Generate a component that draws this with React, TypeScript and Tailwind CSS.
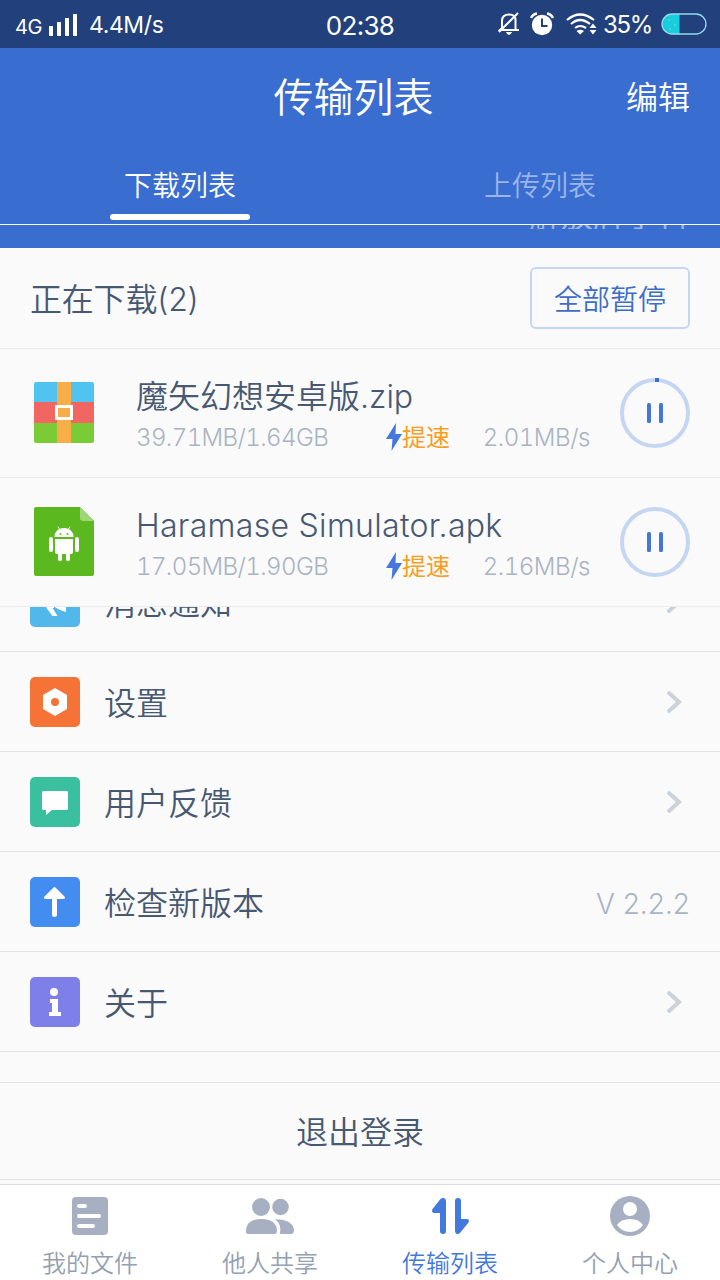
import React from "react";

const downloads = [
    { id: 1, kind: "zip", name: "魔矢幻想安卓版.zip", size: "39.71MB/1.64GB", speed: "2.01MB/s", started: true },
    { id: 2, kind: "apk", name: "Haramase Simulator.apk", size: "17.05MB/1.90GB", speed: "2.16MB/s", started: false },
];

const ZipIcon = () => (
    <svg width="60" height="61" viewBox="0 0 60 61">
        <path d="M2 0H58Q60 0 60 2V20H0V2Q0 0 2 0Z" fill="#50c3f0" />
        <path d="M0 20H60V41H0Z" fill="#f26661" />
        <path d="M0 41H60V59Q60 61 58 61H2Q0 61 0 59Z" fill="#7acb35" />
        <path d="M23 0H37V61H23Z" fill="#f7ad48" />
        <rect x="22.500" y="24.500" width="15" height="12" fill="#f7ad48" stroke="#fff" strokeWidth="3" />
    </svg>
);

const ApkIcon = () => (
    <svg width="60" height="69" viewBox="0 0 60 69">
        <path d="M2 0H46L60 14V67Q60 69 58 69H2Q0 69 0 67V2Q0 0 2 0Z" fill="#5cb81f" />
        <path d="M46 0L60 14H49Q46 14 46 11Z" fill="#9ed67a" />
        <g fill="#fff">
            <path d="M20.500 30C20.500 24.500 24.500 21 30 21S39.500 24.500 39.500 30Z" />
            <path d="M24 19.500L26 23M36 19.500L34 23" stroke="#fff" strokeWidth="1" />
            <path d="M21 32H39V45Q39 47 37 47H36V52.200A2 2 0 0 1 32 52.200V47H28V52.200A2 2 0 0 1 24 52.200V47H23Q21 47 21 45Z" />
            <rect x="15" y="30" width="4" height="15" rx="2" />
            <rect x="41" y="30" width="4" height="15" rx="2" />
        </g>
        <circle cx="26.500" cy="27" r="1" fill="#5cb81f" />
        <circle cx="33.500" cy="27" r="1" fill="#5cb81f" />
    </svg>
);

const PauseButton = ({ started }: any) => (
    <button className="shrink-0">
        <svg width="70" height="70" viewBox="0 0 70 70">
            <circle cx="35" cy="35" r="33" fill="none" stroke="#c5d6f3" strokeWidth="4" />
            {started && <path d="M35 0H39V4H35Z" fill="#3d6fc8" />}
            <rect x="27" y="25" width="4" height="20" rx="1.500" fill="#4478d6" />
            <rect x="39" y="25" width="4" height="20" rx="1.500" fill="#4478d6" />
        </svg>
    </button>
);

const DownloadItem = ({ item }: any) => (
    <li className="flex h-[129px] items-center border-b border-[#ececee] pr-[30px] pl-[34px]">
        <div className="w-[102px] shrink-0 pb-0.5">{item.kind === "zip" ? <ZipIcon /> : <ApkIcon />}</div>
        <div className="w-[454px] shrink-0 pt-1">
            <div className={`h-[46px] text-[32px] leading-[46px] whitespace-nowrap ${item.kind === "zip" ? "tracking-normal" : "tracking-[0.3px]"}`}>
                {item.name}
            </div>
            <div className="flex h-9 items-center text-2xl leading-9 text-[#a9b4c3] tabular-nums">
                <span className="w-[250px] tracking-[-0.6px]">{item.size}</span>
                <svg className="mb-[3px] shrink-0" width="16" height="28" viewBox="0 0 16 28">
                    <path d="M10 0L0 16H6.500L5.500 28L16 11H9.500Z" fill="#4478dc" />
                </svg>
                <span className="font-normal text-[#f99d1c]">提速</span>
                <span className="flex-1" />
                <span className="tracking-[-0.45px]">{item.speed}</span>
            </div>
        </div>
        <span className="flex-1" />
        <PauseButton started={item.started} />
    </li>
);

const Chevron = () => (
    <svg className="mr-2" width="16" height="24" viewBox="0 0 16 24">
        <path d="M3 3L13 12L3 21" fill="none" stroke="#ccd2d9" strokeWidth="4" strokeLinecap="round" strokeLinejoin="miter" />
    </svg>
);

const MenuItem = ({ color, icon, label, extra }: any) => (
    <li className="flex h-[100px] shrink-0 items-center border-b border-[#e2e4e6] px-[30px]">
        <div className={`mr-6 h-[50px] w-[50px] rounded-[5px] ${color}`}>
            <svg width="50" height="50" viewBox="0 0 50 50" fill="#fff">
                {icon}
            </svg>
        </div>
        <span className="flex-1 pt-1 text-[32px] leading-[46px]">{label}</span>
        {extra || <Chevron />}
    </li>
);

const TabItem = ({ icon, label, active }: any) => (
    <li className={`flex flex-1 flex-col items-center ${active ? "text-[#4478dc]" : "text-[#94a0b2]"}`}>
        <svg className="mt-[7px] shrink-0" width="60" height="48" viewBox="0 0 60 48" fill={active ? "#4478dc" : "#a7b0c2"}>
            {icon}
        </svg>
        <span className="mt-2 text-2xl leading-8">{label}</span>
    </li>
);

const StatusBar = () => (
    <div className="grid h-12 grid-cols-3 items-center bg-[#22407b] font-normal text-white">
        <div className="flex items-center pl-[15px]">
            <span className="w-[34px] pt-[5px] text-xl tracking-tight">4G</span>
            <svg width="29" height="24" viewBox="0 0 29 24" fill="#fff">
                <path d="M0 14H4V24H0ZM8 10H12V24H8ZM16 6H20V24H16ZM24 2H28V24H24Z" />
            </svg>
            <span className="ml-[11px] pt-0.5 text-[23px] tracking-[-0.4px]">4.4M/s</span>
        </div>
        <div className="pt-1 text-center text-[26px] leading-none tracking-[-0.7px]">02:38</div>
        <div className="flex items-center justify-end pr-[13px]">
            <svg width="22" height="24" viewBox="0 0 22 24" fill="none" stroke="#fff" strokeWidth="2">
                <path d="M4 17V9Q4 2.500 11 2.500T17.500 9V18H2L4 16M1 20L20 1M16 18H21" />
                <path d="M8 20H14Q13 23 11 23T8 20Z" fill="#fff" stroke="none" />
            </svg>
            <svg className="ml-[10px]" width="24" height="24" viewBox="0 0 24 24">
                <circle cx="12" cy="13" r="10.200" fill="#fff" />
                <path d="M1 6Q3 2 7 1.500M23 6Q21 2 17 1.500" fill="none" stroke="#fff" strokeWidth="2.500" />
                <path d="M12 6.500V14H17.500" fill="none" stroke="#22407b" strokeWidth="2" />
            </svg>
            <svg className="ml-3" width="32" height="24" viewBox="0 0 32 24" fill="none" stroke="#fff" strokeWidth="2.200">
                <path d="M1 8Q14 -3 28 8M5 12Q14 4 24 12M9 16Q14 12 20 16" />
                <path d="M10.500 19Q14 16.500 18 19L14.200 22.500ZM27 11.500L30.500 16H23.500ZM27 22.500L30.500 18H23.500Z" fill="#fff" stroke="none" />
            </svg>
            <span className="ml-[5px] pt-0.5 text-[24px] tracking-[-1.3px]">35%</span>
            <svg className="ml-[9px]" width="46" height="22" viewBox="0 0 46 22">
                <path d="M18.500 1H11A10 10 0 0 0 11 21H18.500Z" fill="#18cde0" />
                <rect x="1" y="1" width="44" height="20" rx="10" fill="none" stroke="#8fdcee" strokeWidth="1.300" />
                <path d="M7 6H9V8H7ZM13 11H15V13H13ZM8 15H10V17H8Z" fill="#55d6a8" />
            </svg>
        </div>
    </div>
);

export default function App() {
    return (
        <div className="flex h-[1280px] w-[720px] flex-col overflow-hidden bg-[#fafafa] font-['Inter','Noto_Sans_CJK_SC',sans-serif] font-[350] text-[#475872]">
            <StatusBar />
            <header className="h-[200px] bg-[#3a6dd0] text-white">
                <div className="grid h-[100px] grid-cols-3 items-center px-[30px]">
                    <span />
                    <h1 className="pr-[13px] text-center text-[40px] leading-none">传输列表</h1>
                    <button className="text-right text-[32px] leading-none">编辑</button>
                </div>
                <nav className="grid h-[76px] grid-cols-2 text-[28px]">
                    <button className="flex flex-col items-center justify-end pb-1">
                        <span className="mb-2 leading-[40px]">下载列表</span>
                        <span className="h-1.5 w-[140px] rounded-full bg-white" />
                    </button>
                    <button className="flex flex-col items-center justify-end pb-[18px] leading-[40px] text-[#9bb5e9]">上传列表</button>
                </nav>
                <div className="flex h-[5px] items-end justify-end overflow-hidden border-t border-white pr-[31px] text-[32px] leading-[27px] font-normal text-[#9bb5e9]">
                    <span>解放牌小科</span>
                </div>
            </header>

            <div className="flex h-[101px] shrink-0 items-center justify-between border-b border-[#ececee] px-[30px]">
                <h2 className="pt-1 text-[32px] tracking-[-0.2px]">正在下载(2)</h2>
                <button className="h-[62px] w-40 rounded-md border-2 border-[#c5d6f3] pt-1 text-[28px] text-[#3d6dc8]">全部暂停</button>
            </div>
            <ul className="shrink-0">
                {downloads.map((item) => (
                    <DownloadItem key={item.id} item={item} />
                ))}
            </ul>

            <ul className="shrink-0">
                <div className="flex h-[45px] flex-col justify-end overflow-hidden">
                    <MenuItem color="bg-[#52b7eb]" label="消息通知" icon={<path d="M14 20L36 11V35Q30 34 24 29.500V31H22.500L27.500 39H22.500L16.500 31Z" />} />
                </div>
                <MenuItem
                    color="bg-[#f57336]"
                    label="设置"
                    icon={<path fillRule="evenodd" d="M25 11L37 18V32L25 39L13 32V18ZM25 21A4 4 0 1 0 25 29A4 4 0 1 0 25 21Z" />}
                />
                <MenuItem color="bg-[#3ac09f]" label="用户反馈" icon={<path d="M13 14H37L38 15V32L37 33H22L16 38V33H13L12 32V15Z" />} />
                <MenuItem
                    color="bg-[#438cf0]"
                    label="检查新版本"
                    icon={<path d="M23.500 10.500Q24.500 9.500 25.500 10.500L34.500 19.500Q36 22 33 22H27V38Q27 40 24.500 40T22 38V22H16Q13 22 14.500 19.500Z" />}
                    extra={<span className="pt-1 text-[28px] text-[#a9b4c3]">V 2.2.2</span>}
                />
                <MenuItem
                    color="bg-[#7f7fe9]"
                    label="关于"
                    icon={
                        <>
                            <circle cx="24" cy="15" r="4" />
                            <path d="M20 22H28V35H31V39H19V35H22V26H20Z" />
                        </>
                    }
                />
            </ul>
            <button className="mt-[30px] h-[98px] shrink-0 border-y border-[#e2e4e6] pt-1 text-[32px]">退出登录</button>

            <ul className="mt-1 flex h-24 shrink-0 border-t border-[#d9dbde] bg-white">
                <TabItem
                    label="我的文件"
                    icon={
                        <>
                            <rect x="12" y="5" width="36" height="38" rx="4" />
                            <path d="M19 14H25M19 24H39M19 34H33" stroke="#fff" strokeWidth="4" strokeLinecap="round" />
                        </>
                    }
                />
                <TabItem
                    label="他人共享"
                    icon={
                        <>
                            <circle cx="21" cy="15" r="9" />
                            <circle cx="40.500" cy="15" r="8.300" />
                            <path d="M6 39C6 31 12 27 21.500 27S37 31 37 39Q37 42 34 42H8Q6 42 6 40Z" />
                            <path d="M35 27.300C46 27 54 31.500 54 38Q54 42 51 42H40Q42 32 35 27.300Z" />
                        </>
                    }
                />
                <TabItem
                    active
                    label="传输列表"
                    icon={
                        <>
                            <path d="M20.500 7Q22 5.500 24 6Q26 6.800 26 9V39A3 3 0 0 1 20 39V21H14Q11 20.500 12.500 17Z" />
                            <path d="M35 9A3 3 0 0 1 41 9V27H47Q50 27.500 48.500 30.500L40 41Q38.500 42.500 37 42Q35 41.300 35 39Z" />
                        </>
                    }
                />
                <TabItem
                    label="个人中心"
                    icon={
                        <>
                            <circle cx="30" cy="24" r="20" />
                            <circle cx="30" cy="17" r="7" fill="#fff" />
                            <path d="M17 33Q21 27 30 27T43 33Q38 40 30 40T17 33Z" fill="#fff" />
                        </>
                    }
                />
            </ul>
        </div>
    );
}
